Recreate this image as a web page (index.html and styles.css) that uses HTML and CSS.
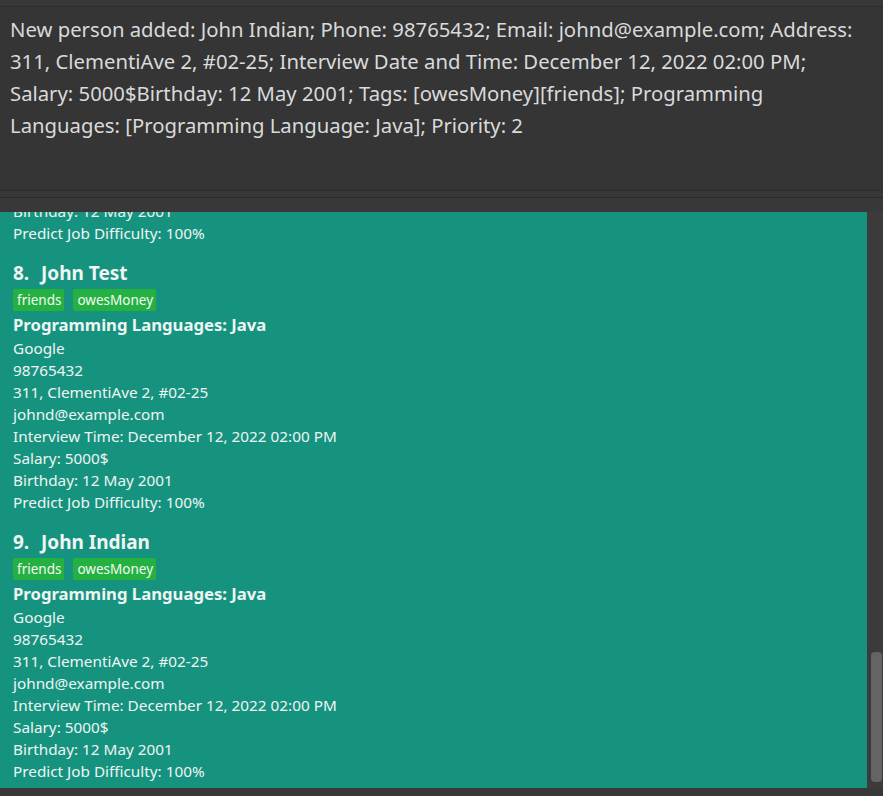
FILE: index.html
```html
<!DOCTYPE html>
<html>
<head>
<meta charset="utf-8">
<link rel="stylesheet" href="styles.css">
</head>
<body>
<div class="app">
  <div class="topbar"></div>
  <div class="result">
    <div class="result-line">New person added: John Indian; Phone: 98765432; Email: johnd@example.com; Address:</div>
    <div class="result-line">311, ClementiAve 2, #02-25; Interview Date and Time: December 12, 2022 02:00 PM;</div>
    <div class="result-line">Salary: 5000$Birthday: 12 May 2001; Tags: [owesMoney][friends]; Programming</div>
    <div class="result-line">Languages: [Programming Language: Java]; Priority: 2</div>
  </div>
  <div class="divider"></div>
  <div class="list-area">
    <div class="viewport">
      <div class="list">
        <div class="card">
          <div class="name"><span class="idx">7.</span>John Doe</div>
          <div class="tags"><span class="tag">friends</span><span class="tag">owesMoney</span></div>
          <div class="langs">Programming Languages: Java</div>
          <div class="line">Google</div>
          <div class="line">98765432</div>
          <div class="line">311, ClementiAve 2, #02-25</div>
          <div class="line">johnd@example.com</div>
          <div class="line">Interview Time: December 12, 2022 02:00 PM</div>
          <div class="line">Salary: 5000$</div>
          <div class="line">Birthday: 12 May 2001</div>
          <div class="line">Predict Job Difficulty: 100%</div>
        </div>
        <div class="card">
          <div class="name"><span class="idx">8.</span>John Test</div>
          <div class="tags"><span class="tag">friends</span><span class="tag">owesMoney</span></div>
          <div class="langs">Programming Languages: Java</div>
          <div class="line">Google</div>
          <div class="line">98765432</div>
          <div class="line">311, ClementiAve 2, #02-25</div>
          <div class="line">johnd@example.com</div>
          <div class="line">Interview Time: December 12, 2022 02:00 PM</div>
          <div class="line">Salary: 5000$</div>
          <div class="line">Birthday: 12 May 2001</div>
          <div class="line">Predict Job Difficulty: 100%</div>
        </div>
        <div class="card">
          <div class="name"><span class="idx">9.</span>John Indian</div>
          <div class="tags"><span class="tag">friends</span><span class="tag">owesMoney</span></div>
          <div class="langs">Programming Languages: Java</div>
          <div class="line">Google</div>
          <div class="line">98765432</div>
          <div class="line">311, ClementiAve 2, #02-25</div>
          <div class="line">johnd@example.com</div>
          <div class="line">Interview Time: December 12, 2022 02:00 PM</div>
          <div class="line">Salary: 5000$</div>
          <div class="line">Birthday: 12 May 2001</div>
          <div class="line">Predict Job Difficulty: 100%</div>
        </div>
      </div>
    </div>
    <div class="scrollbar"><div class="thumb"></div></div>
  </div>
</div>
</body>
</html>
```

FILE: styles.css
```css
html, body {
  margin: 0;
  padding: 0;
  background: #383838;
}
.app {
  width: 883px;
  height: 796px;
  display: flex;
  flex-direction: column;
  overflow: hidden;
  font-family: "Noto Sans", "Open Sans", sans-serif;
}
.topbar {
  height: 6px;
  background: #383838;
  border-bottom: 1px solid #2b2b2b;
}
.result {
  height: 184px;
  box-sizing: border-box;
  padding: 6px 0 0 10px;
  background: #353535;
  border-bottom: 1px solid #2b2b2b;
}
.result-line {
  font-size: 20.3px;
  line-height: 32px;
  color: #d9dadb;
  white-space: nowrap;
}
.divider {
  height: 6px;
  background: #383838;
  border-bottom: 1px solid #2b2b2b;
}
.list-area {
  display: flex;
  padding-top: 14px;
  height: 576px;
}
.viewport {
  width: 867px;
  height: 576px;
  overflow: hidden;
  background: #16937f;
}
.list {
  margin-top: -229px;
}
.card {
  padding: 8px 13px;
  height: 269px;
  box-sizing: border-box;
  background: #16937f;
  color: #eef5f3;
}
.name {
  font-size: 19px;
  font-weight: 700;
  line-height: 26px;
}
.idx {
  display: inline-block;
  width: 28px;
}
.tags {
  display: flex;
  gap: 9px;
  margin-top: 3px;
  height: 22px;
}
.tag {
  background: #25b042;
  color: #f4fbf4;
  font-size: 13.5px;
  line-height: 22px;
  padding: 0 3px 0 4px;
  border-radius: 2px;
}
.langs {
  font-size: 16.7px;
  font-weight: 700;
  line-height: 24px;
  margin-top: 2px;
}
.line {
  font-size: 15.3px;
  line-height: 22px;
}
.scrollbar {
  width: 16px;
  height: 576px;
  background: #3b3b3b;
  position: relative;
}
.thumb {
  position: absolute;
  left: 4px;
  right: 1px;
  top: 440px;
  height: 130px;
  background: #646464;
  border-radius: 4px;
}
```
